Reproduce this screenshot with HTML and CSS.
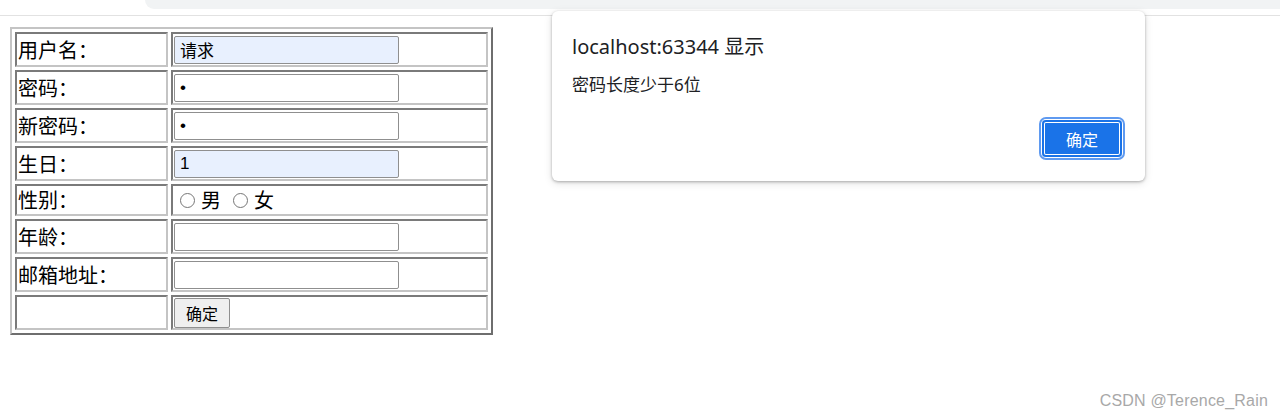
FILE: index.html
```html
<!DOCTYPE html>
<html lang="zh-CN">
<head>
<meta charset="utf-8">
<title>注册</title>
<link rel="stylesheet" href="styles.css">
</head>
<body>
<div class="chrome"><div class="pill"></div></div>
<main class="page">
  <table class="form">
    <tr>
      <td class="label">用户名：</td>
      <td class="field"><input class="text autofill" type="text" value="请求"></td>
    </tr>
    <tr>
      <td class="label">密码：</td>
      <td class="field"><input class="text pass" type="password" value="1"></td>
    </tr>
    <tr>
      <td class="label">新密码：</td>
      <td class="field"><input class="text pass" type="password" value="1"></td>
    </tr>
    <tr>
      <td class="label">生日：</td>
      <td class="field"><input class="text autofill" type="text" value="1"></td>
    </tr>
    <tr class="short">
      <td class="label">性别：</td>
      <td class="field">
        <span class="radios">
          <label class="opt"><input class="radio" type="radio" name="sex">男</label>
          <label class="opt"><input class="radio" type="radio" name="sex">女</label>
        </span>
      </td>
    </tr>
    <tr>
      <td class="label">年龄：</td>
      <td class="field"><input class="text" type="text"></td>
    </tr>
    <tr>
      <td class="label">邮箱地址：</td>
      <td class="field"><input class="text" type="text"></td>
    </tr>
    <tr>
      <td class="label"></td>
      <td class="field"><button class="submit" type="button">确定</button></td>
    </tr>
  </table>
</main>

<div class="dialog" role="alertdialog">
  <div class="dialog-title">localhost:63344 显示</div>
  <div class="dialog-msg">密码长度少于6位</div>
  <div class="dialog-actions"><button class="ok" type="button">确定</button></div>
</div>

<div class="watermark">CSDN @Terence_Rain</div>
</body>
</html>
```

FILE: styles.css
```css
html, body {
  margin: 0;
  padding: 0;
  background: #fff;
}

body {
  width: 1280px;
  height: 418px;
  overflow: hidden;
  position: relative;
  font-family: "Noto Sans CJK SC", "Noto Sans", sans-serif;
  color: #000;
}

.chrome {
  height: 16px;
  border-bottom: 1px solid #e2e2e2;
  box-sizing: border-box;
}

.pill {
  margin-left: 145px;
  height: 9px;
  background: #f1f3f4;
  border-bottom-left-radius: 10px;
}

.page {
  padding: 11px 0 0 10px;
}

.form {
  border-collapse: separate;
  border-spacing: 3px;
  border-style: solid;
  border-width: 2px;
  border-color: #c4c4c4 #6e6e6e #6e6e6e #c4c4c4;
  width: 483px;
}

.form td {
  border-style: solid;
  border-width: 2px;
  border-color: #7a7a7a #c4c4c4 #c4c4c4 #7a7a7a;
  height: 31px;
  padding: 0 1px;
  vertical-align: middle;
  box-sizing: content-box;
}

.form tr.short td {
  height: 28px;
}

.form td.label {
  width: 147px;
  font-size: 20px;
  line-height: 26px;
  padding-left: 1px;
  white-space: nowrap;
}

.form td.field {
  width: 311px;
}

.text {
  display: block;
  box-sizing: border-box;
  width: 225px;
  height: 28px;
  margin: 0;
  padding: 0 5px;
  border: 1px solid #8f8f8f;
  border-radius: 2px;
  font-family: "Liberation Sans", "Noto Sans CJK SC", sans-serif;
  font-size: 17px;
  color: #000;
  background: #fff;
}

.text.pass {
  font-family: "Liberation Sans", Arial, sans-serif;
  font-size: 17px;
}

.text.autofill {
  background: #e8f0fe;
}

.radios {
  display: flex;
  align-items: center;
  font-size: 20px;
  line-height: 26px;
  padding-left: 6px;
}

.opt {
  display: flex;
  align-items: center;
  margin-right: 12px;
}

.radio {
  width: 15px;
  height: 15px;
  margin: 0 6px 0 0;
  accent-color: #767676;
}

.submit {
  display: block;
  width: 56px;
  height: 30px;
  margin: 0;
  padding: 0;
  border: 1px solid #8f8f8f;
  border-radius: 2px;
  background: #efefef;
  font-family: "Noto Sans CJK SC", "Noto Sans", sans-serif;
  font-size: 16px;
  color: #000;
}

.dialog {
  position: absolute;
  left: 552px;
  top: 11px;
  width: 593px;
  height: 170px;
  box-sizing: border-box;
  padding: 22px 23px 0 20px;
  background: #fff;
  border-radius: 6px;
  box-shadow: 0 1px 3px rgba(0, 0, 0, 0.28), 0 2px 8px rgba(0, 0, 0, 0.12);
  display: flex;
  flex-direction: column;
  font-family: "Noto Sans", "Noto Sans CJK SC", sans-serif;
  color: #202124;
}

.dialog-title {
  font-size: 20px;
  line-height: 27px;
}

.dialog-msg {
  margin-top: 14px;
  font-size: 17px;
  line-height: 22px;
}

.dialog-actions {
  display: flex;
  justify-content: flex-end;
  margin-top: 24px;
}

.ok {
  width: 80px;
  height: 37px;
  border: none;
  border-radius: 4px;
  background: #1a73e8;
  color: #fff;
  font-family: "Noto Sans CJK SC", "Noto Sans", sans-serif;
  font-size: 16px;
  box-shadow: inset 0 0 0 2px #1a73e8, inset 0 0 0 3px #fff;
  outline: 2px solid #5f9af0;
  outline-offset: 1px;
}

.watermark {
  position: absolute;
  right: 12px;
  bottom: 8px;
  font-family: "Liberation Sans", Arial, sans-serif;
  font-size: 16px;
  color: #a8a8a8;
  letter-spacing: 0.2px;
}
```
